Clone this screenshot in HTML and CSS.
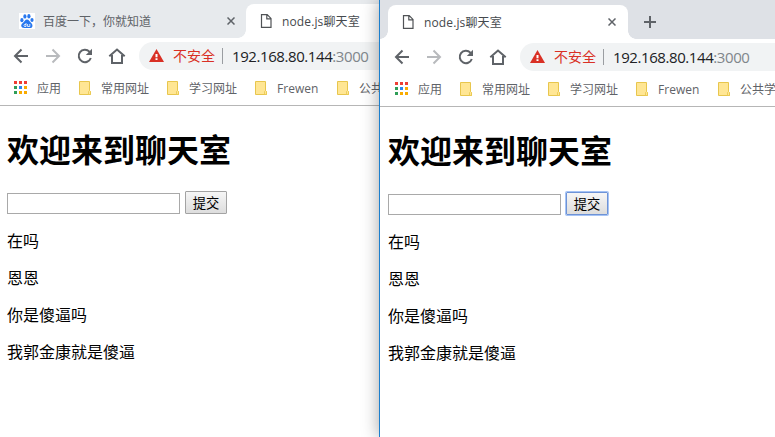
FILE: index.html
```html
<!DOCTYPE html>
<html lang="zh-CN">
<head>
<meta charset="utf-8">
<title>node.js聊天室</title>
<link rel="stylesheet" href="styles.css">
</head>
<body>
<svg width="0" height="0" class="defs">
  <defs>
    <symbol id="back" viewBox="0 0 16 16"><path d="M15 8H2.5M8.5 1.5L2 8l6.500 6.500" fill="none" stroke="currentColor" stroke-width="2"/></symbol>
    <symbol id="forward" viewBox="0 0 16 16"><path d="M1 8h12.500M7.500 1.500L14 8l-6.500 6.500" fill="none" stroke="currentColor" stroke-width="2"/></symbol>
    <symbol id="reload" viewBox="0 0 16 16"><path d="M13.800 10A6.200 6.200 0 1 1 12.400 3.600L13.500 4.700" fill="none" stroke="currentColor" stroke-width="2"/><path d="M15 .8V7H8.800z" fill="currentColor"/></symbol>
    <symbol id="home" viewBox="0 0 18 16"><path d="M1.300 8.300L9 1.500l7.700 6.800M4 7v8h10V7" fill="none" stroke="currentColor" stroke-width="2"/></symbol>
    <symbol id="warn" viewBox="0 0 15 13"><path d="M7.500 0L15 13H0z" fill="#d93025"/><path d="M6.500 5h2v3.200h-2zM6.500 9.300h2V11h-2z" fill="#fff"/></symbol>
    <symbol id="file" viewBox="0 0 12 14"><path d="M1.500 .6h5.700L11 4.400v9H1.500zM6.800 .6v4.200H11" fill="none" stroke="#505356" stroke-width="1.200"/></symbol>
    <symbol id="close" viewBox="0 0 8 8"><path d="M.5.5l7 7M7.500.5l-7 7" stroke="#5f6368" stroke-width="1.500"/></symbol>
    <symbol id="folder" viewBox="0 0 12 14"><path d="M.5.5h10v9.200l1 .8v3H.5z" fill="#ffe694" stroke="#e8c64d"/><path d="M9.500 13.500v-3l1-1 1 1v3z" fill="#ffe694" stroke="#e8c64d" stroke-width=".8"/></symbol>
    <symbol id="apps" viewBox="0 0 13 13"><path d="M0 0h3v3H0zM5 0h3v3H5zM10 0h3v3h-3z" fill="#ee3e34"/><path d="M0 5h3v3H0zM0 10h3v3H0z" fill="#2f9e58"/><path d="M5 5h3v3H5z" fill="#2b88f0"/><path d="M10 5h3v3h-3zM5 10h3v3H5zM10 10h3v3h-3z" fill="#f9ab00"/></symbol>
    <symbol id="paw" viewBox="0 0 16 16"><path fill="#fff" d="M0 0h16v16H0z"/><g fill="#2878ef"><ellipse cx="2.900" cy="7.200" rx="1.600" ry="2.100"/><ellipse cx="5.900" cy="3.400" rx="1.600" ry="2.200"/><ellipse cx="9.900" cy="3.300" rx="1.600" ry="2.200"/><ellipse cx="13" cy="6.900" rx="1.600" ry="2"/><path d="M8 6.500c2 0 2.600 2 4 3.200 2 1.700 2.300 5.300-1 5.300-2 0-4 0-5.500 0-4 0-4-3.500-1.800-5C5.500 8.700 6 6.500 8 6.500z"/></g><path d="M7 10v3.500H5.500q-1-1.200 0-2H7M8.600 11v2.500h2.200V11" fill="none" stroke="#fff" stroke-width=".8"/></symbol>
  </defs>
</svg>
<div class="desktop">
  <section class="window window-back">
    <div class="frame">
      <header class="tabs">
        <div class="tab tab-idle"><svg class="paw"><use href="#paw"/></svg><span class="tab-title">百度一下，你就知道</span><svg class="close"><use href="#close"/></svg></div>
        <div class="tab tab-active"><svg class="file"><use href="#file"/></svg><span class="tab-title">node.js聊天室</span></div>
      </header>
      <nav class="toolbar">
        <svg class="nav"><use href="#back"/></svg><svg class="nav nav-off"><use href="#forward"/></svg><svg class="nav"><use href="#reload"/></svg><svg class="nav nav-home"><use href="#home"/></svg>
        <div class="omnibox"><svg class="warn"><use href="#warn"/></svg><span class="insecure">不安全</span><span class="rule"></span><span class="url">192.168.80.144<span class="port">:3000</span></span></div>
      </nav>
      <div class="bookmarks">
        <span class="mark"><svg class="apps"><use href="#apps"/></svg><span>应用</span></span>
        <span class="mark"><svg class="folder"><use href="#folder"/></svg><span>常用网址</span></span>
        <span class="mark"><svg class="folder"><use href="#folder"/></svg><span>学习网址</span></span>
        <span class="mark"><svg class="folder"><use href="#folder"/></svg><span class="latin">Frewen</span></span>
        <span class="mark"><svg class="folder"><use href="#folder"/></svg><span>公共</span></span>
      </div>
      <main class="page">
        <h1>欢迎来到聊天室</h1>
        <form class="send"><input type="text" class="field"><button type="button" class="submit">提交</button></form>
        <p>在吗</p><p>恩恩</p><p>你是傻逼吗</p><p>我郭金康就是傻逼</p>
      </main>
    </div>
  </section>
  <section class="window window-front">
    <div class="frame">
      <header class="tabs">
        <div class="tab tab-active"><svg class="file"><use href="#file"/></svg><span class="tab-title">node.js聊天室</span><svg class="close"><use href="#close"/></svg></div>
        <svg class="plus" viewBox="0 0 12 12"><path d="M6 0v12M0 6h12" stroke="#5f6368" stroke-width="2"/></svg>
      </header>
      <nav class="toolbar">
        <svg class="nav"><use href="#back"/></svg><svg class="nav nav-off"><use href="#forward"/></svg><svg class="nav"><use href="#reload"/></svg><svg class="nav nav-home"><use href="#home"/></svg>
        <div class="omnibox"><svg class="warn"><use href="#warn"/></svg><span class="insecure">不安全</span><span class="rule"></span><span class="url">192.168.80.144<span class="port">:3000</span></span></div>
      </nav>
      <div class="bookmarks">
        <span class="mark"><svg class="apps"><use href="#apps"/></svg><span>应用</span></span>
        <span class="mark"><svg class="folder"><use href="#folder"/></svg><span>常用网址</span></span>
        <span class="mark"><svg class="folder"><use href="#folder"/></svg><span>学习网址</span></span>
        <span class="mark"><svg class="folder"><use href="#folder"/></svg><span class="latin">Frewen</span></span>
        <span class="mark"><svg class="folder"><use href="#folder"/></svg><span>公共学</span></span>
      </div>
      <main class="page">
        <h1>欢迎来到聊天室</h1>
        <form class="send"><input type="text" class="field"><button type="button" class="submit submit-focus">提交</button></form>
        <p>在吗</p><p>恩恩</p><p>你是傻逼吗</p><p>我郭金康就是傻逼</p>
      </main>
    </div>
  </section>
</div>
</body>
</html>
```
FILE: styles.css
```css
* { box-sizing: border-box; }
body { margin: 0; overflow: hidden; background: #fff; color: #000; font-family: "Open Sans", "Noto Sans CJK SC", sans-serif; }
svg { display: block; flex: none; }
.defs { display: none; }
.desktop { display: flex; width: 775px; height: 437px; overflow: hidden; }
.window { height: 437px; background: #fff; }
.window-back { width: 379px; overflow: hidden; flex: none; }
.window-back .frame { margin: -1px 0 0 -1px; width: 480px; }
.window-front { flex: 1; min-width: 0; border-left: 1px solid #1c7fcd; position: relative; box-shadow: 0 0 16px rgba(0, 0, 0, .36); }
.window-front .frame { overflow: hidden; }

.tabs { display: flex; height: 39px; padding: 5px 0 0 8px; background: #dee1e6; }
.window-back .tabs { background: #e7eaed; }
.tab { display: flex; align-items: center; height: 34px; flex: none; font-size: 12px; line-height: 18px; color: #45494d; }
.tab-active { position: relative; width: 240px; padding-left: 14px; background: #fff; border-radius: 8px 8px 0 0; }
.tab-active::before, .tab-active::after { content: ""; position: absolute; bottom: 0; width: 8px; height: 8px; }
.tab-active::before { left: -8px; background: radial-gradient(circle at 0 0, transparent 7.500px, #fff 8px); }
.tab-active::after { right: -8px; background: radial-gradient(circle at 100% 0, transparent 7.500px, #fff 8px); }
.tab-idle { width: 239px; padding-left: 12px; color: #5f6368; }
.tab-title { padding-top: 2px; }
.tab-idle .tab-title { margin-left: 8px; }
.tab-active .tab-title { margin-left: 10px; letter-spacing: .12px; }
.paw { width: 16px; height: 16px; }
.file { width: 12px; height: 14px; }
.close { width: 8px; height: 8px; margin: 0 12px 0 auto; }
.tab-idle .close { margin-right: 11px; }
.plus { width: 12px; height: 12px; margin: 11px 0 0 16px; }

.toolbar { display: flex; align-items: center; height: 36px; padding-left: 14px; color: #5f6368; }
.nav { width: 16px; height: 16px; margin-right: 16px; }
.nav-off { color: #b8babd; }
.nav-home { width: 18px; margin: 0 13px 0 -1px; }
.omnibox { display: flex; align-items: center; width: 420px; height: 28px; flex: none; padding-left: 10px; border-radius: 14px; background: #f1f3f4; }
.warn { width: 15px; height: 13px; margin-top: -1px; }
.insecure { margin-left: 9px; width: 42px; font-size: 14px; line-height: 20px; color: #d93025; white-space: nowrap; }
.rule { width: 1px; height: 16px; margin: 0 9px 0 7px; background: #9a9da1; }
.url { font-size: 15px; letter-spacing: -.42px; line-height: 20px; color: #202124; white-space: nowrap; }
.port { color: #80868b; }

.bookmarks { display: flex; align-items: center; gap: 18px; height: 32px; padding: 0 0 4px 15px; border-bottom: 1px solid #b6b6b6; font-size: 12px; line-height: 18px; color: #5f6368; white-space: nowrap; overflow: hidden; }
.mark { display: flex; align-items: center; gap: 10px; flex: none; }
.mark span { padding-top: 2px; }
.apps { width: 13px; height: 13px; }
.folder { width: 12px; height: 14px; }
.latin { width: 42px; }

.page { padding: 0 8px; font-size: 16px; line-height: 21px; }
h1 { margin: 22px 0 20px; font-size: 32px; line-height: 43px; font-weight: 700; }
.send { display: flex; align-items: flex-end; gap: 5px; height: 23px; margin: 0 0 17px; }
.field { width: 173px; height: 21px; margin: 0; padding: 1px; border: 1px solid #a9a9a9; background: #fff; }
.submit { width: 42px; height: 23px; margin: 0; padding: 0; border: 1px solid #a3a3a3; border-radius: 1px; background: linear-gradient(#f6f6f6, #dddddd); color: #000; font: 13.333px/19px "Noto Sans CJK SC", sans-serif; }
.submit-focus { border-color: #6e93d6; box-shadow: 0 0 0 1px #a5c3f5; }
p { margin: 0 0 16px; }
```
